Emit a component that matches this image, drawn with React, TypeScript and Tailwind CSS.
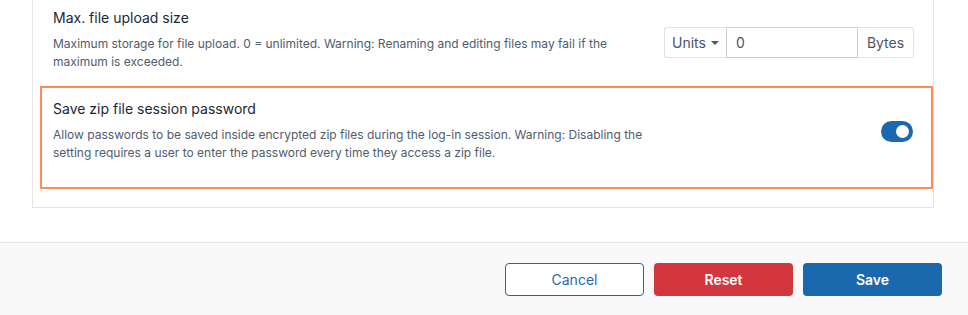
export default function App() {
  return (
    <div className="w-[968px] h-[315px] bg-white overflow-hidden flex flex-col font-['Inter',sans-serif]">
      <div className="ml-[32px] w-[902px] border-x border-b border-[#e4e4e4] pl-[7px] pb-[18px]">
        {/* upload size row */}
        <div className="flex items-start justify-between border-2 border-transparent pl-[11px] pr-[17px] pt-[6px] pb-[13px]">
          <div className="max-w-[600px]">
            <div className="text-[14px] leading-[20px] text-[#1c2736] mb-[7px]">Max. file upload size</div>
            <p className="text-[12px] leading-[18px] text-[#505c6c]">
              Maximum storage for file upload. 0 = unlimited. Warning: Renaming and editing files may fail if the
              maximum is exceeded.
            </p>
          </div>
          <div className="mt-[19px] flex h-[31px] text-[14px] text-[#4b5563]">
            <button className="flex items-center gap-[5px] w-[62px] justify-center border border-[#e2e2e2] border-r-0 rounded-l-[3px] bg-white">
              Units
              <span className="w-0 h-0 border-x-[4px] border-x-transparent border-t-[4px] border-t-[#4b5563]" />
            </button>
            <input
              defaultValue="0"
              className="w-[132px] border border-[#cfcfcf] px-[9px] outline-none text-[#4b5563]"
            />
            <span className="flex items-center justify-center w-[56px] border border-[#e2e2e2] border-l-0 rounded-r-[3px]">
              Bytes
            </span>
          </div>
        </div>

        {/* zip password row */}
        <div className="flex items-center justify-between border-2 border-[#ff8b52] pl-[11px] pr-[18px] pt-[11px] pb-[25px]">
          <div className="max-w-[600px]">
            <div className="text-[14px] leading-[20px] text-[#1c2736] mb-[7px]">Save zip file session password</div>
            <p className="text-[12px] leading-[18px] text-[#505c6c]">
              Allow passwords to be saved inside encrypted zip files during the log-in session. Warning: Disabling the
              setting requires a user to enter the password every time they access a zip file.
            </p>
          </div>
          <button className="mt-[2px] w-[32px] h-[21px] rounded-full bg-[#1a68ae] flex items-center justify-end pr-[4px]">
            <span className="w-[13px] h-[13px] rounded-full bg-white" />
          </button>
        </div>
      </div>

      <div className="mt-[34px] flex-1 border-t border-[#e4e4e4] bg-[#f9f9f9] flex justify-end gap-[10px] pt-[20px] pr-[26px]">
        <button className="w-[139px] h-[33px] rounded-[4px] border border-[#1a68ae] bg-white text-[14px] text-[#2a68ab]">
          Cancel
        </button>
        <button className="w-[139px] h-[33px] rounded-[4px] bg-[#d4363f] text-[14px] font-semibold text-white">
          Reset
        </button>
        <button className="w-[139px] h-[33px] rounded-[4px] bg-[#1a68ae] text-[14px] font-semibold text-white">
          Save
        </button>
      </div>
    </div>
  )
}
